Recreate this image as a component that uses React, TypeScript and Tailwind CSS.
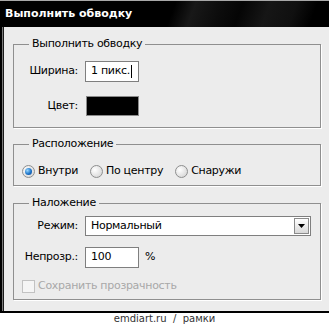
function Radio({ checked }: { checked?: boolean }) {
  return (
    <span className="w-[13px] h-[13px] rounded-full border border-[#8e8f8f] bg-[radial-gradient(circle_at_35%_35%,#ffffff,#cfcfcf)] flex items-center justify-center shrink-0">
      {checked && (
        <span className="w-[7px] h-[7px] rounded-full bg-[radial-gradient(circle_at_35%_35%,#9ad8ff,#1c74c9_55%,#0b3f8a)]" />
      )}
    </span>
  );
}

function Group({
  title,
  className,
  children,
}: {
  title: string;
  className?: string;
  children: React.ReactNode;
}) {
  return (
    <fieldset
      className={
        "w-[308px] border border-[#8f8f8f] shadow-[1px_1px_0_#ffffff] " +
        (className ?? "")
      }
    >
      <legend className="ml-[15px] px-[3px] leading-[14px] h-[14px]">{title}</legend>
      {children}
    </fieldset>
  );
}

export default function App() {
  return (
    <div className="w-[329px] h-[324px] bg-white font-['DejaVu_Sans',sans-serif] text-[11px] tracking-[-0.3px] text-black overflow-hidden">
      <div className="flex flex-col h-[313px] border-b-2 border-black">
        <div className="h-[27px] border-t border-[#a8a8a8] bg-[linear-gradient(110deg,#000_0%,#000_52%,#181818_58%,#0c0c0c_66%,#050505_72%,#161616_80%,#101010_88%,#000_94%)] flex items-center pl-[5px] text-white font-bold text-[11px] tracking-normal">
          Выполнить обводку
        </div>
        <div className="flex-1 flex bg-[#ececec]">
          <div className="w-[4px] flex shrink-0">
            <div className="w-[2px] bg-black" />
            <div className="w-[1px] bg-[#7a7a7a]" />
            <div className="w-[1px] bg-[#1a1a1a]" />
          </div>
          <div className="flex-1 pl-[9px] pt-[10px] flex flex-col">
            <Group title="Выполнить обводку" className="pb-[11px]">
              <div className="flex items-center mt-[10px] h-[21px]">
                <span className="w-[64px] text-right">Ширина:</span>
                <div className="ml-[7px] w-[54px] h-[21px] border border-[#7f7f7f] bg-white flex items-center pl-[5px]">
                  <span>1 пикс.</span>
                  <span className="ml-[1px] w-[1px] h-[13px] bg-black" />
                </div>
              </div>
              <div className="flex items-center mt-[14px] h-[20px]">
                <span className="w-[64px] text-right">Цвет:</span>
                <div className="ml-[8px] w-[53px] h-[20px] border border-[#8a8a8a] bg-black" />
              </div>
            </Group>
            <Group title="Расположение" className="mt-[9px] pb-[6px]">
              <div className="flex items-center mt-[12px] h-[16px] pl-[8px]">
                <Radio checked />
                <span className="ml-[3px]">Внутри</span>
                <span className="ml-[12px]">
                  <Radio />
                </span>
                <span className="ml-[3px]">По центру</span>
                <span className="ml-[12px]">
                  <Radio />
                </span>
                <span className="ml-[3px]">Снаружи</span>
              </div>
            </Group>
            <Group title="Наложение" className="mt-[10px] pb-[6px]">
              <div className="flex items-center mt-[6px] h-[20px]">
                <span className="w-[64px] text-right">Режим:</span>
                <div className="ml-[7px] w-[226px] h-[20px] border border-[#7f7f7f] bg-white flex items-center pl-[5px] pr-[1px]">
                  <span className="flex-1">Нормальный</span>
                  <span className="w-[15px] h-[16px] border border-[#8a8a8a] bg-[linear-gradient(#ffffff,#d8d8d8)] flex items-center justify-center">
                    <svg width="7" height="4" viewBox="0 0 7 4">
                      <polygon points="0,0 7,0 3.5,4" fill="#000" />
                    </svg>
                  </span>
                </div>
              </div>
              <div className="flex items-center mt-[11px] h-[21px]">
                <span className="w-[64px] text-right">Непрозр.:</span>
                <div className="ml-[7px] w-[54px] h-[21px] border border-[#7f7f7f] bg-white flex items-center pl-[5px]">
                  100
                </div>
                <span className="ml-[6px]">%</span>
              </div>
              <div className="flex items-center mt-[11px] h-[14px] pl-[8px]">
                <span className="w-[13px] h-[13px] border border-[#c2c2c2] bg-[#f5f5f5]" />
                <span className="ml-[3px] text-[#a8a8a8]">Сохранить прозрачность</span>
              </div>
            </Group>
          </div>
        </div>
      </div>
      <div className="text-center text-[10px] leading-[10px] tracking-normal text-[#333] pt-[1px]">
        emdiart.ru&nbsp; /&nbsp; рамки
      </div>
    </div>
  );
}
